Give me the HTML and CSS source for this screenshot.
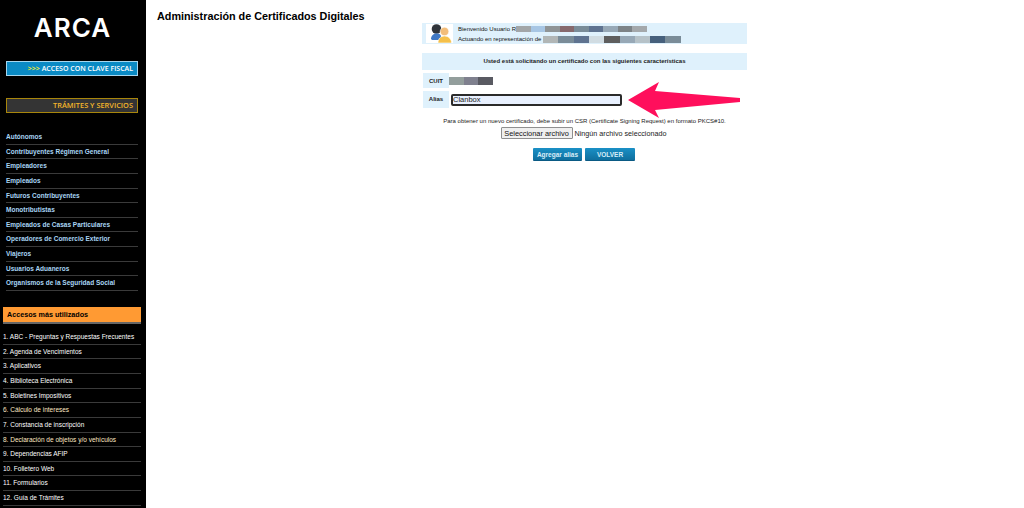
FILE: index.html
```html
<!DOCTYPE html>
<html lang="es">
<head>
<meta charset="UTF-8">
<meta name="viewport" content="width=device-width, initial-scale=1.0">
<title>Administración de Certificados Digitales</title>
<link rel="stylesheet" href="styles.css">
</head>
<body>
  <aside class="sidebar">
    <div class="logo">ARCA</div>
    <a class="btn-clave"><span class="chevrons">&gt;&gt;&gt;</span> ACCESO CON CLAVE FISCAL</a>
    <a class="btn-tramites">TRÁMITES Y SERVICIOS</a>
    <ul class="menu">
      <li>Autónomos</li>
      <li>Contribuyentes Régimen General</li>
      <li>Empleadores</li>
      <li>Empleados</li>
      <li>Futuros Contribuyentes</li>
      <li>Monotributistas</li>
      <li>Empleados de Casas Particulares</li>
      <li>Operadores de Comercio Exterior</li>
      <li>Viajeros</li>
      <li>Usuarios Aduaneros</li>
      <li>Organismos de la Seguridad Social</li>
    </ul>
    <div class="accesos-title">Accesos más utilizados</div>
    <ol class="accesos">
      <li>1. ABC - Preguntas y Respuestas Frecuentes</li>
      <li>2. Agenda de Vencimientos</li>
      <li>3. Aplicativos</li>
      <li>4. Biblioteca Electrónica</li>
      <li>5. Boletines Impositivos</li>
      <li>6. Cálculo de intereses</li>
      <li>7. Constancia de inscripción</li>
      <li>8. Declaración de objetos y/o vehículos</li>
      <li>9. Dependencias AFIP</li>
      <li>10. Folletero Web</li>
      <li>11. Formularios</li>
      <li>12. Guía de Trámites</li>
    </ol>
  </aside>

  <main class="content">
    <h1>Administración de Certificados Digitales</h1>
    <div class="panel">
      <div class="welcome">
        <div class="user-icon">
          <svg width="27" height="19" viewBox="0 0 27 19">
            <circle cx="10.500" cy="5" r="4.800" fill="#2f343a"/>
            <path d="M5 15c0-3 2-5.500 5.500-5.500S15 11 15 13v3H6z" fill="#3f78c4"/>
            <circle cx="18.500" cy="7.500" r="4.300" fill="#f2bd7a" stroke="#fff" stroke-width=".6"/>
            <path d="M12 19c0-4 2.500-7 6.500-7s7 3 7 7z" fill="#f5c04a" stroke="#fff" stroke-width=".6"/>
          </svg>
        </div>
        <div class="welcome-text">
          <div class="welcome-line">Bienvenido Usuario R<span class="blur-row">
            <i class="c1"></i><i class="c2"></i><i class="c3"></i><i class="c4"></i><i class="c5"></i><i class="c6"></i><i class="c7"></i><i class="c8"></i><i class="c9"></i>
          </span></div>
          <div class="welcome-line">Actuando en representación de <span class="blur-row second">
            <i class="c10"></i><i class="c5"></i><i class="c6"></i><i class="c11"></i><i class="c12"></i><i class="c7"></i><i class="c13"></i><i class="c14"></i><i class="c5"></i>
          </span></div>
        </div>
      </div>

      <div class="notice">Usted está solicitando un certificado con las siguientes características</div>

      <div class="field cuit-row">
        <div class="field-label">CUIT</div>
        <div class="blur-row cuit"><i class="c15"></i><i class="c16"></i><i class="c17"></i></div>
      </div>
      <div class="field alias-row">
        <div class="field-label">Alias</div>
        <div class="alias-input">Clanbox</div>
      </div>

      <p class="csr-text">Para obtener un nuevo certificado, debe subir un CSR (Certificate Signing Request) en formato PKCS#10.</p>
      <div class="file-row">
        <button class="file-btn">Seleccionar archivo</button>
        <span>Ningún archivo seleccionado</span>
      </div>
      <div class="actions">
        <button class="action-btn add">Agregar alias</button>
        <button class="action-btn back">VOLVER</button>
      </div>

      <svg class="arrow" width="114" height="38" viewBox="0 0 114 38">
        <path d="M1 18 32 0 28 9 113 16V20L28 28 32 36z" fill="#ff0f5c"/>
      </svg>
    </div>
  </main>
</body>
</html>
```

FILE: styles.css
```css
html, body {
  margin: 0;
  height: 508px;
  overflow: hidden;
}
body {
  display: flex;
  font-family: "Liberation Sans", Arial, sans-serif;
  background: #fff;
  color: #000;
}

/* Sidebar */
.sidebar {
  width: 146px;
  height: 508px;
  flex-shrink: 0;
  background: #000;
  overflow: hidden;
  padding-top: 13px;
  box-sizing: border-box;
}
.logo {
  color: #fff;
  font-family: "Inter", sans-serif;
  font-weight: 600;
  font-size: 26px;
  line-height: 30px;
  text-align: center;
  margin-left: -1px;
  letter-spacing: 1px;
}
.btn-clave, .btn-tramites {
  display: block;
  box-sizing: border-box;
  width: 132px;
  margin-left: 6px;
  text-align: right;
  font-family: "Open Sans", sans-serif;
  font-size: 7px;
  font-weight: 600;
}
.btn-clave {
  margin-top: 18px;
  height: 15px;
  line-height: 13px;
  padding-right: 4px;
  background: #0a8ac4;
  border: 1px solid #a6d6ee;
  color: #fff;
}
.chevrons {
  color: #f4ea2a;
  font-weight: 700;
}
.btn-tramites {
  margin-top: 22px;
  height: 15px;
  line-height: 13px;
  padding-right: 4px;
  font-size: 7.400px;
  background: #343434;
  border: 1px solid #a8860c;
  color: #f3b52a;
}
.menu, .accesos {
  list-style: none;
  margin: 0;
  padding: 0;
}
.menu {
  margin-top: 17px;
  margin-left: 6px;
  width: 132px;
}
.menu li {
  height: 14.65px;
  box-sizing: border-box;
  line-height: 13px;
  font-size: 6.500px;
  font-weight: 700;
  color: #a9d6f5;
  border-bottom: 1px solid #3a3a3a;
}
.accesos-title {
  box-sizing: border-box;
  width: 138px;
  height: 17px;
  margin: 16px 0 0 3px;
  padding-left: 4px;
  line-height: 15px;
  font-size: 7.200px;
  font-weight: 700;
  background: #ff9a33;
  border-bottom: 2px solid #666;
  color: #000;
}
.accesos {
  margin: 6px 0 0 3px;
  width: 138px;
}
.accesos li {
  height: 14.65px;
  box-sizing: border-box;
  line-height: 13px;
  font-size: 6.500px;
  white-space: nowrap;
  color: #fff;
  border-bottom: 1px solid #3a3a3a;
}
.accesos li:nth-child(8),
.accesos li:nth-child(6) {
  color: #ffe9c4;
}

/* Main content */
.content {
  flex: 1;
  padding-left: 11px;
}
h1 {
  margin: 0;
  padding-top: 10px;
  font-size: 10.800px;
  line-height: 13px;
  font-weight: 700;
}
.panel {
  position: relative;
  width: 325px;
  margin: 0 0 0 265px;
  font-size: 6px;
}
.welcome {
  display: flex;
  height: 21px;
  background: #dff1fc;
}
.user-icon {
  width: 27px;
  height: 19px;
  margin: 1px 0 0 4px;
  background: #fff;
}
.welcome-text {
  margin-left: 5px;
  padding-top: 1px;
}
.welcome-line {
  display: flex;
  align-items: center;
  height: 10px;
  white-space: pre;
  color: #111;
}
.blur-row {
  display: flex;
  height: 6px;
}
.blur-row i {
  display: block;
  width: 14.500px;
  height: 100%;
}
.blur-row.second {
  height: 7px;
}
.blur-row.second i {
  width: 15.300px;
}
.blur-row.cuit {
  margin: 4px 0 0 -2px;
  height: 8px;
}
.c1 { background: #a2a6a8; }
.c2 { background: #a7c6e4; }
.c3 { background: #8f9496; }
.c4 { background: #86696d; }
.c5 { background: #7a8c98; }
.c6 { background: #5f7390; }
.c7 { background: #97a8b6; }
.c8 { background: #7d8387; }
.c9 { background: #a4a8ab; }
.c10 { background: #b1b6b6; }
.c11 { background: #d1dce2; }
.c12 { background: #5e5e5e; }
.c13 { background: #b6c2c8; }
.c14 { background: #46607c; }
.c15 { background: #939e9c; }
.c16 { background: #7f808e; }
.c17 { background: #595a62; }

.notice {
  margin-top: 9px;
  height: 17px;
  line-height: 17px;
  text-align: center;
  font-weight: 700;
  background: #dff1fc;
  color: #222;
}
.field {
  display: flex;
  gap: 2px;
}
.cuit-row {
  margin-top: 3px;
  height: 15px;
}
.alias-row {
  margin-top: 3px;
  height: 17px;
}
.field-label {
  width: 26px;
  margin-left: 1px;
  text-align: center;
  font-weight: 700;
  line-height: 17px;
  background: #dff1fc;
  color: #222;
}
.alias-input {
  box-sizing: border-box;
  width: 171px;
  height: 12px;
  margin-top: 3px;
  padding-left: 0;
  line-height: 7px;
  font-size: 7.500px;
  background: #e8f0fe;
  border: 2px solid #2a2a2a;
  border-radius: 2px;
  color: #222;
}
.csr-text {
  margin: 9px 0 0;
  line-height: 8px;
  text-align: center;
  color: #222;
}
.file-row {
  display: flex;
  align-items: center;
  justify-content: center;
  gap: 2px;
  margin-top: 2px;
  margin-left: -2px;
  font-size: 7.200px;
  color: #222;
}
.file-btn {
  box-sizing: border-box;
  width: 72px;
  height: 12px;
  padding: 0;
  font-family: inherit;
  font-size: 7.400px;
  background: #efefef;
  border: 1px solid #8f8f8f;
  border-radius: 1px;
  color: #111;
}
.actions {
  display: flex;
  justify-content: center;
  gap: 3px;
  margin-top: 9px;
  margin-left: -1px;
}
.action-btn {
  height: 13px;
  padding: 0;
  font-family: inherit;
  font-size: 6.500px;
  font-weight: 700;
  line-height: 11px;
  color: #d8edf8;
  border: 0;
  border-radius: 1px;
  background: linear-gradient(#1a90c6, #0f6f9e);
  border-bottom: 1px solid #0a5a84;
}
.action-btn.add { width: 49px; }
.action-btn.back { width: 50px; }

/* annotation arrow over the form */
.arrow {
  position: absolute;
  left: 205px;
  top: 59px;
}
```
